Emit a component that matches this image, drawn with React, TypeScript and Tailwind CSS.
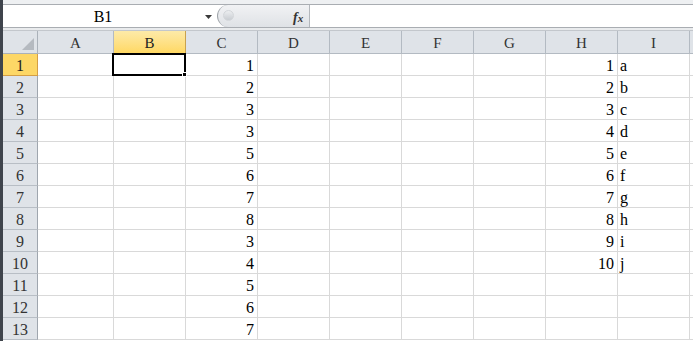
import React from "react";

const colDefs: { name: string; w: string }[] = [
  { name: "A", w: "w-[76px]" },
  { name: "B", w: "w-[72px]" },
  { name: "C", w: "w-[72px]" },
  { name: "D", w: "w-[72px]" },
  { name: "E", w: "w-[72px]" },
  { name: "F", w: "w-[72px]" },
  { name: "G", w: "w-[72px]" },
  { name: "H", w: "w-[72px]" },
  { name: "I", w: "w-[72px]" },
  { name: "", w: "w-[72px]" },
];

const cData = [1, 2, 3, 3, 5, 6, 7, 8, 3, 4, 5, 6, 7];
const hData = [1, 2, 3, 4, 5, 6, 7, 8, 9, 10];
const iData = ["a", "b", "c", "d", "e", "f", "g", "h", "i", "j"];

function cellValue(col: string, r: number): { v: string; right: boolean } | null {
  if (col === "C" && r < cData.length) return { v: String(cData[r]), right: true };
  if (col === "H" && r < hData.length) return { v: String(hData[r]), right: true };
  if (col === "I" && r < iData.length) return { v: iData[r], right: false };
  return null;
}

export default function App() {
  const rows = Array.from({ length: 13 }, (_, i) => i);
  return (
    <div className="w-[693px] h-[341px] overflow-hidden flex bg-white font-['Liberation_Serif','DejaVu_Serif',serif]">
      <div className="w-[3px] h-full shrink-0 bg-[#3f444c]" />
      <div className="flex-1 flex flex-col min-w-0">
        <div className="h-[4px] shrink-0 bg-[#eef0f2]" />
        <div className="h-[1px] shrink-0 bg-[#a9adb2]" />
        {/* formula bar */}
        <div className="h-[22px] shrink-0 flex">
          <div className="w-[214px] shrink-0 bg-white relative flex items-center justify-center pr-[14px]">
            <span className="text-[16px] text-black leading-none mt-[2px]">B1</span>
            <svg className="absolute left-[202px] top-[10px]" width="7" height="4" viewBox="0 0 7 4">
              <path d="M0 0 L7 0 L3.5 4 Z" fill="#3a3a3a" />
            </svg>
          </div>
          <div className="w-[92px] shrink-0 relative flex items-center rounded-l-full border-l border-[#9ea3a9] bg-gradient-to-b from-[#f1f2f4] to-[#dfe2e6]">
            <div className="absolute left-[5px] top-[5px] w-[11px] h-[11px] rounded-full bg-gradient-to-b from-[#eceef0] to-[#c9cdd2] border border-[#d3d6da]" />
            <span className="absolute left-[75px] top-[2px] text-[14px] italic font-bold text-[#333]">
              f<span className="text-[11px]">x</span>
            </span>
          </div>
          <div className="w-[1px] shrink-0 bg-[#b3b7bc]" />
          <div className="flex-1 bg-white" />
        </div>
        <div className="h-[1px] shrink-0 bg-[#a9adb2]" />
        <div className="h-[2px] shrink-0 bg-[#e9ebed]" />
        <div className="h-[1px] shrink-0 bg-[#c3c7cc]" />
        {/* column headers */}
        <div className="h-[23px] shrink-0 flex">
          <div className="w-[35px] shrink-0 relative bg-[#dfe3e8] border-r border-b border-[#aab1b9]">
            <svg className="absolute right-[3px] bottom-[3px]" width="12" height="12" viewBox="0 0 12 12">
              <path d="M12 0 L12 12 L0 12 Z" fill="#b5bac0" />
            </svg>
          </div>
          {colDefs.map((c, i) =>
            c.name === "B" ? (
              <div
                key={i}
                className={`${c.w} shrink-0 flex items-center justify-center text-[15px] text-[#222] bg-gradient-to-b from-[#fdeaa8] to-[#ffd862] border-r border-b border-[#c9a24e]`}
              >
                <span className="mt-[2px]">{c.name}</span>
              </div>
            ) : (
              <div
                key={i}
                className={`${c.w} shrink-0 flex items-center justify-center text-[15px] text-[#333] bg-[#dfe3e8] border-r border-b border-[#b3bac2]`}
              >
                {c.name && <span className="mt-[2px]">{c.name}</span>}
              </div>
            )
          )}
        </div>
        {/* rows */}
        {rows.map((r) => (
          <div key={r} className="h-[22px] shrink-0 flex">
            {r === 0 ? (
              <div className="w-[35px] shrink-0 flex items-end justify-center text-[16px] text-[#222] bg-[#fdd766] border-r border-b border-[#d49e45]">
                <span className="leading-[19px]">{r + 1}</span>
              </div>
            ) : (
              <div className="w-[35px] shrink-0 flex items-end justify-center text-[16px] text-[#333] bg-[#dfe3e8] border-r border-b border-r-[#9fa6ae] border-b-[#b8bec5]">
                <span className="leading-[19px]">{r + 1}</span>
              </div>
            )}
            {colDefs.map((c, i) => {
              const val = cellValue(c.name, r);
              const selected = c.name === "B" && r === 0;
              return (
                <div
                  key={i}
                  className={`${c.w} shrink-0 relative flex items-end border-r border-b border-[#d9d9d9] ${
                    val && !val.right ? "justify-start pl-[2px]" : "justify-end pr-[3px]"
                  }`}
                >
                  {val && <span className="text-[16px] leading-[19px] text-black">{val.v}</span>}
                  {selected && (
                    <div className="absolute -left-[2px] -top-[1px] -right-[1px] -bottom-[1px] border-2 border-black z-10">
                      <div className="absolute -right-[3px] -bottom-[3px] w-[5px] h-[5px] bg-black border border-white" />
                    </div>
                  )}
                </div>
              );
            })}
          </div>
        ))}
      </div>
    </div>
  );
}
